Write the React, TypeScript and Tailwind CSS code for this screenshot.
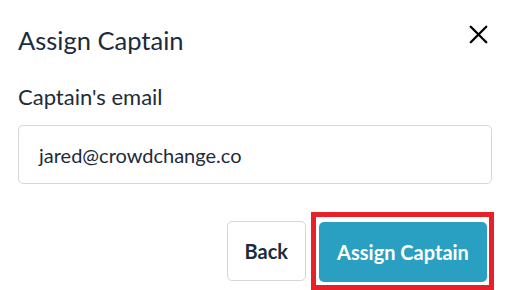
import { X } from "lucide-react";

export default function App() {
  return (
    <div className="w-[510px] h-[290px] bg-white overflow-hidden font-['Lato',sans-serif] text-[#1e2b3b]">
      <div className="flex items-start justify-between pl-[18px] pr-[16px] pt-[24px]">
        <h2 className="text-[25.5px] leading-[32px]">Assign Captain</h2>
        <button className="text-black -mt-[5px]">
          <X size={31} strokeWidth={1.8} />
        </button>
      </div>

      <div className="px-[18px] mt-[28px]">
        <label className="block text-[22px] leading-[26px]">Captain's email</label>
        <div className="mt-[15px] h-[59px] w-[474px] border border-[#d6d6d6] rounded-[5px] flex items-center px-[20px] text-[20px]">
          jared@crowdchange.co
        </div>
      </div>

      <div className="flex items-center justify-end gap-[5px] pr-[16px] mt-[28px]">
        <button className="h-[60px] px-[17px] border border-[#d6d6d6] rounded-[5px] text-[20px] font-bold bg-white">
          Back
        </button>
        <div className="border-[5px] border-[#e8202a] pt-[5px] pb-[3px] pl-[3px] pr-[2px]">
          <button className="h-[60px] w-[168px] rounded-[5px] bg-[#29a0c2] text-white text-[20px] font-bold">
            Assign Captain
          </button>
        </div>
      </div>
    </div>
  );
}
